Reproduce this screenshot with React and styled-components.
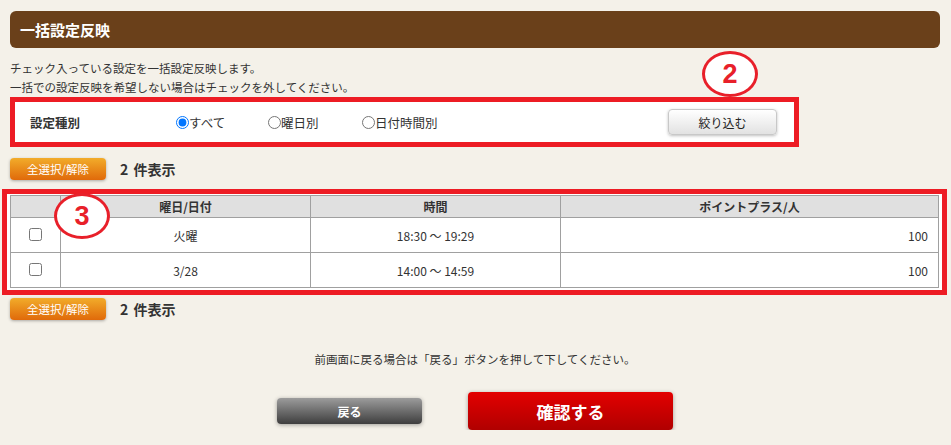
import React from 'react';
import styled, { createGlobalStyle } from 'styled-components';

const GlobalStyle = createGlobalStyle`
  html, body {
    margin: 0;
    padding: 0;
    background: #f4f1e9;
  }
  body {
    font-family: "Noto Sans CJK JP", "Liberation Sans", sans-serif;
    font-size: 12px;
    color: #333;
  }
`;

const Page = styled.div`
  width: 951px;
  box-sizing: border-box;
  padding: 11px 11px 0 10px;
`;

const Header = styled.h1`
  margin: 0;
  height: 37px;
  line-height: 37px;
  padding-left: 10px;
  background: #6a401a;
  border-radius: 6px;
  color: #fff;
  font-size: 15px;
  font-weight: bold;
`;

const Desc = styled.p`
  margin: 11px 0 0;
  line-height: 19px;
  font-size: 11.5px;
  color: #333;
`;

const Marked = styled.div`
  position: relative;
  width: ${({ $width }) => $width};
  margin: ${({ $margin }) => $margin || 0};
  box-sizing: border-box;
  border: 5px solid #ed1c24;
  background: #fff;
`;

const Badge = styled.div`
  position: absolute;
  left: ${({ $x }) => $x}px;
  top: ${({ $y }) => $y}px;
  width: 50px;
  height: 40px;
  border: 3px solid #e8202a;
  border-radius: 50%;
  background: #fff;
  color: #e8202a;
  font-family: "Liberation Sans", sans-serif;
  font-weight: bold;
  font-size: 27px;
  display: flex;
  align-items: center;
  justify-content: center;
  z-index: 2;
`;

const FilterRow = styled.div`
  display: flex;
  align-items: center;
  height: 40px;
  padding: 0 17px 0 15px;
`;

const FilterLabel = styled.div`
  width: 146px;
  font-weight: bold;
  font-size: 12.5px;
  color: #333;
`;

const RadioLabel = styled.label`
  display: flex;
  align-items: center;
  width: ${({ $w }) => $w}px;
  font-size: 12.5px;
  color: #333;

  input {
    margin: 0;
    width: 13px;
    height: 13px;
  }
`;

const GreyButton = styled.button`
  margin-left: auto;
  width: 109px;
  height: 26px;
  border: 1px solid #c8c8c8;
  border-radius: 4px;
  background: linear-gradient(#ffffff, #e2e2e2);
  box-shadow: 0 1px 3px rgba(0, 0, 0, 0.25);
  font-family: inherit;
  font-size: 12px;
  color: #222;
`;

const CountBar = styled.div`
  display: flex;
  align-items: center;
  gap: 14px;
  margin-top: ${({ $top }) => $top}px;
`;

const OrangeButton = styled.button`
  width: 96px;
  height: 22px;
  border: none;
  border-radius: 4px;
  background: linear-gradient(#f2ac2a, #e06a0a);
  box-shadow: 0 1px 3px rgba(0, 0, 0, 0.3);
  color: #fff;
  font-family: inherit;
  font-size: 11.5px;
  padding: 0;
`;

const Count = styled.span`
  font-weight: bold;
  font-size: 14px;
  color: #333;
  word-spacing: 2px;
`;

const TableFrame = styled.div`
  padding: 1px 3px 2px;
`;

const Table = styled.table`
  width: 929px;
  border-collapse: collapse;
  table-layout: fixed;
  background: #fff;

  th, td {
    border: 1px solid #a0a0a0;
    font-size: 12px;
    color: #333;
    text-align: center;
    padding: 0;
  }

  th {
    height: 21px;
    background: #e0e0e0;
    font-weight: bold;
  }

  td {
    height: 34px;
  }

  input {
    margin: 0;
    width: 13px;
    height: 13px;
  }
`;

const NumCell = styled.td`
  && {
    text-align: right;
    padding-right: 10px;
  }
`;

const Note = styled.p`
  margin: 31px 0 0;
  text-align: center;
  font-size: 11.5px;
  color: #333;
`;

const Actions = styled.div`
  display: flex;
  justify-content: center;
  align-items: center;
  gap: 46px;
  margin-top: 25px;
`;

const ActionButton = styled.button`
  width: ${({ $primary }) => ($primary ? 205 : 145)}px;
  height: ${({ $primary }) => ($primary ? 38 : 26)}px;
  border: none;
  border-radius: 4px;
  background: ${({ $primary }) =>
    $primary ? 'linear-gradient(#e30000, #b00000)' : 'linear-gradient(#9c9c9c, #3e3e3e)'};
  box-shadow: 0 1px 4px rgba(0, 0, 0, 0.35);
  color: #fff;
  font-family: inherit;
  font-weight: bold;
  font-size: ${({ $primary }) => ($primary ? 17 : 12)}px;
`;

const rows = [
  { day: '火曜', time: '18:30 〜 19:29', point: 100 },
  { day: '3/28', time: '14:00 〜 14:59', point: 100 },
];

const App = () => (
  <>
    <GlobalStyle />
    <Page>
      <Header>一括設定反映</Header>
      <Desc>
        チェック入っている設定を一括設定反映します。
        <br />
        一括での設定反映を希望しない場合はチェックを外してください。
      </Desc>

      <Marked $width="789px">
        <Badge $x={687} $y={-51}>2</Badge>
        <FilterRow>
          <FilterLabel>設定種別</FilterLabel>
          <RadioLabel $w={92}>
            <input type="radio" name="kind" defaultChecked />すべて
          </RadioLabel>
          <RadioLabel $w={94}>
            <input type="radio" name="kind" />曜日別
          </RadioLabel>
          <RadioLabel $w={120}>
            <input type="radio" name="kind" />日付時間別
          </RadioLabel>
          <GreyButton>絞り込む</GreyButton>
        </FilterRow>
      </Marked>

      <CountBar $top={11}>
        <OrangeButton>全選択/解除</OrangeButton>
        <Count>2 件表示</Count>
      </CountBar>

      <Marked $width="945px" $margin="9px 0 0 -8px">
        <Badge $x={47} $y={-1}>3</Badge>
        <TableFrame>
          <Table>
            <colgroup>
              <col style={{ width: 50 }} />
              <col style={{ width: 250 }} />
              <col style={{ width: 250 }} />
              <col />
            </colgroup>
            <thead>
              <tr>
                <th />
                <th>曜日/日付</th>
                <th>時間</th>
                <th>ポイントプラス/人</th>
              </tr>
            </thead>
            <tbody>
              {rows.map((r, i) => (
                <tr key={i}>
                  <td><input type="checkbox" /></td>
                  <td>{r.day}</td>
                  <td>{r.time}</td>
                  <NumCell>{r.point}</NumCell>
                </tr>
              ))}
            </tbody>
          </Table>
        </TableFrame>
      </Marked>

      <CountBar $top={3}>
        <OrangeButton>全選択/解除</OrangeButton>
        <Count>2 件表示</Count>
      </CountBar>

      <Note>前画面に戻る場合は「戻る」ボタンを押して下してください。</Note>

      <Actions>
        <ActionButton>戻る</ActionButton>
        <ActionButton $primary>確認する</ActionButton>
      </Actions>
    </Page>
  </>
);

export default App;
